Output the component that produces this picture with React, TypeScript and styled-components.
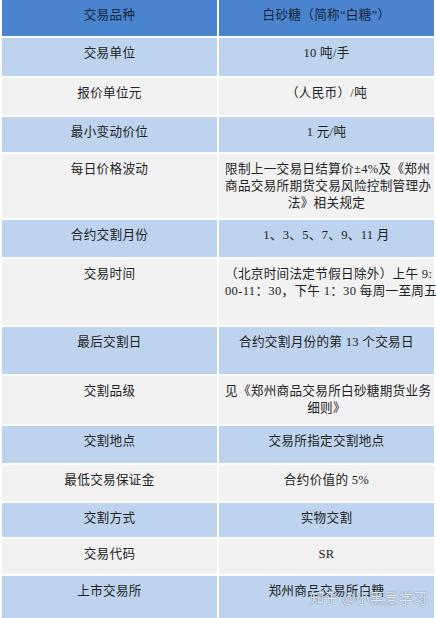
import React from 'react'
import styled, { createGlobalStyle } from 'styled-components'

type Tone = 'head' | 'blue' | 'white'

interface SpecRow {
  label: string
  value: string[]
  tone: Tone
  height: number
}

const rows: SpecRow[] = [
  { label: '交易品种', value: ['白砂糖（简称“白糖”）'], tone: 'head', height: 36 },
  { label: '交易单位', value: ['10 吨/手'], tone: 'blue', height: 38 },
  { label: '报价单位元', value: ['（人民币）/吨'], tone: 'white', height: 37 },
  { label: '最小变动价位', value: ['1 元/吨'], tone: 'blue', height: 35 },
  {
    label: '每日价格波动',
    value: ['限制上一交易日结算价±4%及《郑州', '商品交易所期货交易风险控制管理办', '法》相关规定'],
    tone: 'white',
    height: 64,
  },
  { label: '合约交割月份', value: ['1、3、5、7、9、11 月'], tone: 'blue', height: 37 },
  {
    label: '交易时间',
    value: ['（北京时间法定节假日除外）上午 9:', '00-11：30，下午 1：30 每周一至周五'],
    tone: 'white',
    height: 66,
  },
  { label: '最后交割日', value: ['合约交割月份的第 13 个交易日'], tone: 'blue', height: 47 },
  {
    label: '交割品级',
    value: ['见《郑州商品交易所白砂糖期货业务', '细则》'],
    tone: 'white',
    height: 48,
  },
  { label: '交割地点', value: ['交易所指定交割地点'], tone: 'blue', height: 37 },
  { label: '最低交易保证金', value: ['合约价值的 5%'], tone: 'white', height: 36 },
  { label: '交割方式', value: ['实物交割'], tone: 'blue', height: 34 },
  { label: '交易代码', value: ['SR'], tone: 'white', height: 35 },
  { label: '上市交易所', value: ['郑州商品交易所白糖'], tone: 'blue', height: 48 },
]

const GlobalStyle = createGlobalStyle`
  html, body {
    margin: 0;
    padding: 0;
    background: #fdfdfd;
  }
  body {
    font-family: "Liberation Serif", "Noto Sans CJK SC", serif;
  }
`

const toneColor: Record<Tone, string> = {
  head: '#4a84cf',
  blue: '#bdd3ee',
  white: '#f2f2f2',
}

const Page = styled.div`
  position: relative;
  width: 436px;
  height: 618px;
  overflow: hidden;
`

const Table = styled.div`
  display: grid;
  grid-template-columns: 215px 215px;
  column-gap: 2px;
  row-gap: 2px;
  padding: 0 2px;
`

const Cell = styled.div<{ $tone: Tone; $h: number }>`
  height: ${p => p.$h}px;
  box-sizing: border-box;
  padding: 7px 6px 0;
  background: ${p => toneColor[p.$tone]};
  color: ${p => (p.$tone === 'head' ? '#16243a' : '#222')};
  font-size: 12.6px;
  line-height: 17px;
  letter-spacing: 0.3px;
  text-align: center;
`

const Line = styled.div`
  white-space: nowrap;
`

// zhihu watermark sits over the last row, as in the source image
const Watermark = styled.div`
  position: absolute;
  right: 9px;
  bottom: 11px;
  font-family: "Noto Sans CJK SC", sans-serif;
  font-size: 14px;
  letter-spacing: 0.3px;
  color: rgba(255, 255, 255, 0.85);
  text-shadow:
    0 0 1px rgba(80, 100, 130, 0.7),
    0 0 1px rgba(80, 100, 130, 0.7);
`

const App: React.FC = () => {
  return (
    <Page>
      <GlobalStyle />
      <Table>
        {rows.map(r => (
          <React.Fragment key={r.label}>
            <Cell $tone={r.tone} $h={r.height}>
              <Line>{r.label}</Line>
            </Cell>
            <Cell $tone={r.tone} $h={r.height}>
              {r.value.map(v => (
                <Line key={v}>{v}</Line>
              ))}
            </Cell>
          </React.Fragment>
        ))}
      </Table>
      <Watermark>知乎 @小黑爱学习</Watermark>
    </Page>
  )
}

export default App
